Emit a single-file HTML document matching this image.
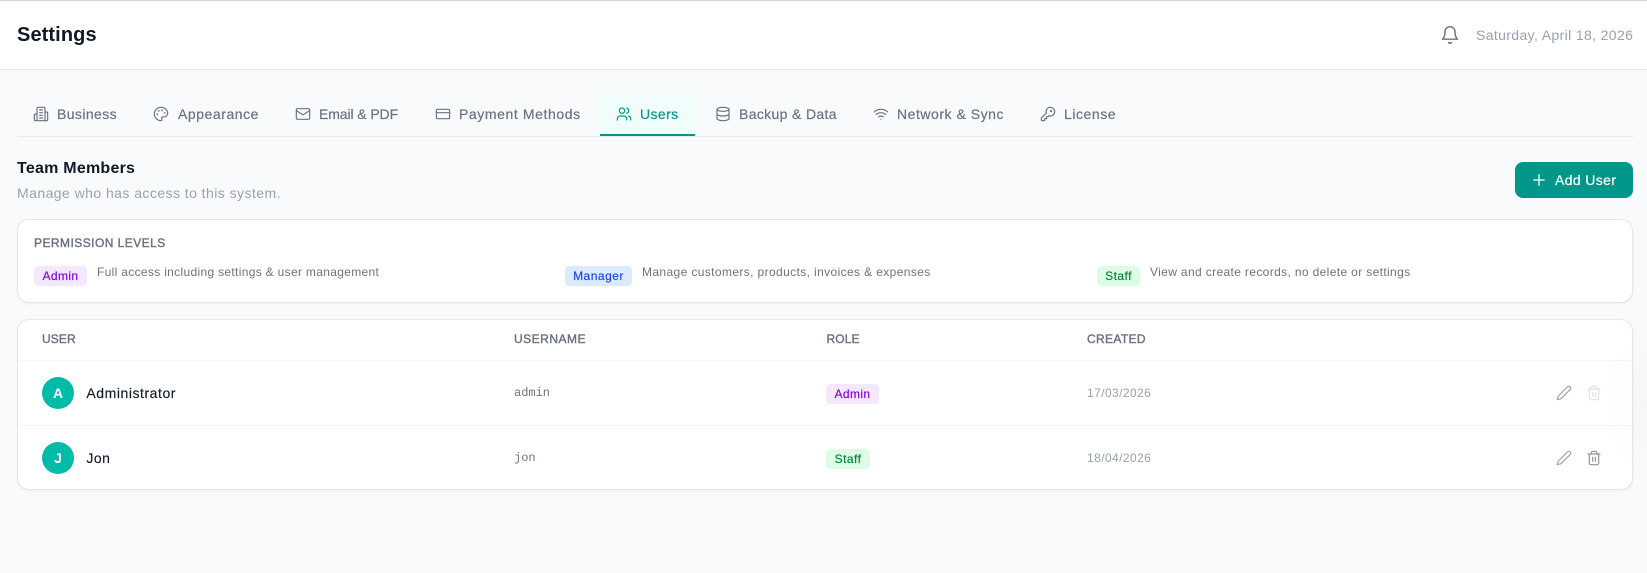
<!DOCTYPE html>
<html lang="en">
<head>
<meta charset="utf-8">
<title>Settings</title>
<style>
html,body{margin:0;padding:0;width:1647px;height:573px;overflow:hidden;background:#f9fafb;font-family:"Liberation Sans",sans-serif}
#app{position:relative;width:1647px;height:573px;overflow:hidden}
.a{position:absolute}
.t{position:absolute;white-space:nowrap;line-height:20px;height:20px}
.m{-webkit-text-stroke:.2px currentColor}
svg.i{position:absolute;fill:none;stroke:currentColor;stroke-width:1.75;stroke-linecap:round;stroke-linejoin:round}
.tab{font-size:14px;color:#6a7282;top:104px}
.ic{color:#6a7282;top:106px}
.card{position:absolute;box-sizing:border-box;background:#fff;border:1px solid #e5e7eb;border-radius:12px;box-shadow:0 1px 2px rgba(0,0,0,.05)}
.b{position:absolute;height:20px;line-height:20px;border-radius:4px;font-size:12px;text-align:center;white-space:nowrap;-webkit-text-stroke:.15px currentColor}
.pu{background:#f3e8ff;color:#8200db;letter-spacing:.4px}
.bl{background:#dbeafe;color:#1447e6;letter-spacing:.5px}
.gr{background:#dcfce7;color:#008236;letter-spacing:.46px}
.d{font-size:12px;color:#6a7282;top:261.5px}
.th{font-size:12px;color:#6a7282;top:329px;-webkit-text-stroke:.4px currentColor}
.av{position:absolute;left:42px;width:32px;height:32px;border-radius:50%;background:#00bba7;color:#fff;font-size:14px;font-weight:700;text-align:center;line-height:32px}
.nm{font-size:14px;color:#101828;left:86.4px;-webkit-text-stroke:.15px currentColor}
.un{font-family:"Liberation Mono",monospace;font-size:12px;color:#6a7282;left:514px}
.dt{font-size:12px;color:#99a1af;left:1087px;letter-spacing:.42px}
</style>
</head>
<body>
<div id="app">
  <div class="a" style="left:0;top:0;width:1647px;height:70px;background:#fff;box-sizing:border-box;border-bottom:1px solid #e5e7eb"></div>
  <div class="a" style="left:0;top:0;width:1647px;height:1px;background:#d1d5dc"></div>
  <div class="t" style="left:17px;top:25px;font-size:20px;font-weight:700;color:#101828;letter-spacing:.1px">Settings</div>
  <svg class="i" style="left:1440px;top:25px;color:#6a7282" width="20" height="20" viewBox="0 0 24 24"><path d="M6 8a6 6 0 0 1 12 0c0 7 3 9 3 9H3s3-2 3-9"/><path d="M10.3 21a1.94 1.94 0 0 0 3.4 0"/></svg>
  <div class="t" style="left:1476px;top:25px;font-size:14px;color:#99a1af;letter-spacing:.37px">Saturday, April 18, 2026</div>

  <div class="a" style="left:600px;top:93px;width:95px;height:43px;background:#f0fdfa;border-radius:6px 6px 0 0"></div>
  <div class="a" style="left:17px;top:136px;width:1616px;height:1px;background:#e5e7eb"></div>
  <div class="a" style="left:600px;top:134px;width:95px;height:2px;background:#009689"></div>

  <svg class="i ic" style="left:33px" width="16" height="16" viewBox="0 0 24 24"><path d="M6 22V4a2 2 0 0 1 2-2h8a2 2 0 0 1 2 2v18Z"/><path d="M6 12H4a2 2 0 0 0-2 2v6a2 2 0 0 0 2 2h2"/><path d="M18 9h2a2 2 0 0 1 2 2v9a2 2 0 0 1-2 2h-2"/><path d="M10 6h4"/><path d="M10 10h4"/><path d="M10 14h4"/><path d="M10 18h4"/></svg>
  <div class="t tab m" style="left:57px;letter-spacing:.4px">Business</div>
  <svg class="i ic" style="left:153px" width="16" height="16" viewBox="0 0 24 24"><circle cx="13.5" cy="6.5" r=".5" fill="currentColor"/><circle cx="17.5" cy="10.5" r=".5" fill="currentColor"/><circle cx="8.5" cy="7.5" r=".5" fill="currentColor"/><circle cx="6.5" cy="12.5" r=".5" fill="currentColor"/><path d="M12 2C6.5 2 2 6.5 2 12s4.5 10 10 10c.926 0 1.648-.746 1.648-1.688 0-.437-.18-.835-.437-1.125-.29-.289-.438-.652-.438-1.125a1.64 1.64 0 0 1 1.668-1.668h1.996c3.051 0 5.555-2.503 5.555-5.554C21.965 6.012 17.461 2 12 2z"/></svg>
  <div class="t tab m" style="left:178px;letter-spacing:.55px">Appearance</div>
  <svg class="i ic" style="left:295px" width="16" height="16" viewBox="0 0 24 24"><rect width="20" height="16" x="2" y="4" rx="2"/><path d="m22 7-8.97 5.7a1.94 1.94 0 0 1-2.06 0L2 7"/></svg>
  <div class="t tab m" style="left:319px;letter-spacing:-.1px">Email &amp; PDF</div>
  <svg class="i ic" style="left:435px" width="16" height="16" viewBox="0 0 24 24"><rect width="20" height="14" x="2" y="5" rx="2"/><line x1="2" x2="22" y1="10" y2="10"/></svg>
  <div class="t tab m" style="left:459px;letter-spacing:.59px">Payment Methods</div>
  <svg class="i ic" style="left:616px;color:#009689" width="16" height="16" viewBox="0 0 24 24"><path d="M16 21v-2a4 4 0 0 0-4-4H6a4 4 0 0 0-4 4v2"/><circle cx="9" cy="7" r="4"/><path d="M22 21v-2a4 4 0 0 0-3-3.87"/><path d="M16 3.13a4 4 0 0 1 0 7.75"/></svg>
  <div class="t tab m" style="left:640px;letter-spacing:.4px;color:#009689">Users</div>
  <svg class="i ic" style="left:715px" width="16" height="16" viewBox="0 0 24 24"><ellipse cx="12" cy="5" rx="9" ry="3"/><path d="M3 5V19A9 3 0 0 0 21 19V5"/><path d="M3 12A9 3 0 0 0 21 12"/></svg>
  <div class="t tab m" style="left:739px;letter-spacing:.35px">Backup &amp; Data</div>
  <svg class="i ic" style="left:873px" width="16" height="16" viewBox="0 0 24 24"><path d="M12 20h.01"/><path d="M2 8.82a15 15 0 0 1 20 0"/><path d="M5 12.859a10 10 0 0 1 14 0"/><path d="M8.5 16.429a5 5 0 0 1 7 0"/></svg>
  <div class="t tab m" style="left:897px;letter-spacing:.53px">Network &amp; Sync</div>
  <svg class="i ic" style="left:1040px" width="16" height="16" viewBox="0 0 24 24"><path d="M2 18v3c0 .6.4 1 1 1h4v-3h3v-3h2l1.4-1.4a6.5 6.5 0 1 0-4-4Z"/><circle cx="16.5" cy="7.5" r=".8"/></svg>
  <div class="t tab m" style="left:1064px;letter-spacing:.55px">License</div>

  <div class="t" style="left:17px;top:159px;font-size:16px;font-weight:700;color:#101828;letter-spacing:.24px">Team Members</div>
  <div class="t" style="left:17px;top:183px;font-size:14px;color:#99a1af;letter-spacing:.445px">Manage who has access to this system.</div>
  <div class="a" style="left:1515px;top:162px;width:118px;height:36px;background:#009689;border-radius:8px"></div>
  <svg class="i" style="left:1530px;top:171px;color:#fff" width="18" height="18" viewBox="0 0 24 24"><path d="M5 12h14"/><path d="M12 5v14"/></svg>
  <div class="t m" style="left:1555px;top:170px;font-size:14px;color:#fff;letter-spacing:.36px">Add User</div>

  <div class="card" style="left:17px;top:219px;width:1616px;height:84px"></div>
  <div class="t" style="left:34px;top:233px;font-size:12px;color:#6a7282;letter-spacing:.45px;-webkit-text-stroke:.4px currentColor">PERMISSION LEVELS</div>
  <div class="b pu" style="left:34px;top:266px;width:53px">Admin</div>
  <div class="t d" style="left:97px;letter-spacing:.32px">Full access including settings &amp; user management</div>
  <div class="b bl" style="left:565px;top:266px;width:67px">Manager</div>
  <div class="t d" style="left:642px;letter-spacing:.38px">Manage customers, products, invoices &amp; expenses</div>
  <div class="b gr" style="left:1097px;top:266px;width:43px">Staff</div>
  <div class="t d" style="left:1150px;letter-spacing:.36px">View and create records, no delete or settings</div>

  <div class="card" style="left:17px;top:319px;width:1616px;height:171px"></div>
  <div class="a" style="left:18px;top:360px;width:1614px;height:1px;background:#f3f4f6"></div>
  <div class="a" style="left:18px;top:425px;width:1614px;height:1px;background:#f3f4f6"></div>
  <div class="t th" style="left:42px;letter-spacing:.1px">USER</div>
  <div class="t th" style="left:514px;letter-spacing:.5px">USERNAME</div>
  <div class="t th" style="left:826.5px;letter-spacing:.1px">ROLE</div>
  <div class="t th" style="left:1087px;letter-spacing:.35px">CREATED</div>

  <div class="av" style="top:377px">A</div>
  <div class="t nm" style="top:383px;letter-spacing:.55px">Administrator</div>
  <div class="t un" style="top:383px">admin</div>
  <div class="b pu" style="left:826px;top:384px;width:53px">Admin</div>
  <div class="t dt" style="top:383px">17/03/2026</div>
  <svg class="i" style="left:1555.5px;top:385px;color:#99a1af" width="16" height="16" viewBox="0 0 24 24"><path d="M17 3a2.85 2.83 0 1 1 4 4L7.5 20.5 2 22l1.5-5.5Z"/></svg>
  <svg class="i" style="left:1586px;top:385px;color:#99a1af;opacity:.3" width="16" height="16" viewBox="0 0 24 24"><path d="M3 6h18"/><path d="M19 6v14c0 1-1 2-2 2H7c-1 0-2-1-2-2V6"/><path d="M8 6V4c0-1 1-2 2-2h4c1 0 2 1 2 2v2"/><line x1="10" x2="10" y1="11" y2="17"/><line x1="14" x2="14" y1="11" y2="17"/></svg>

  <div class="av" style="top:442px">J</div>
  <div class="t nm" style="top:448px;letter-spacing:.45px">Jon</div>
  <div class="t un" style="top:448px">jon</div>
  <div class="b gr" style="left:826px;top:449px;width:44px">Staff</div>
  <div class="t dt" style="top:448px">18/04/2026</div>
  <svg class="i" style="left:1555.5px;top:450px;color:#99a1af" width="16" height="16" viewBox="0 0 24 24"><path d="M17 3a2.85 2.83 0 1 1 4 4L7.5 20.5 2 22l1.5-5.5Z"/></svg>
  <svg class="i" style="left:1586px;top:450px;color:#6a7282;opacity:.75" width="16" height="16" viewBox="0 0 24 24"><path d="M3 6h18"/><path d="M19 6v14c0 1-1 2-2 2H7c-1 0-2-1-2-2V6"/><path d="M8 6V4c0-1 1-2 2-2h4c1 0 2 1 2 2v2"/><line x1="10" x2="10" y1="11" y2="17"/><line x1="14" x2="14" y1="11" y2="17"/></svg>

  <div class="a" style="left:1600px;top:340px;width:47px;height:140px;background:radial-gradient(ellipse at 100% 45%,rgba(17,24,39,.015),rgba(17,24,39,0) 70%);pointer-events:none"></div>
</div>
</body>
</html>
